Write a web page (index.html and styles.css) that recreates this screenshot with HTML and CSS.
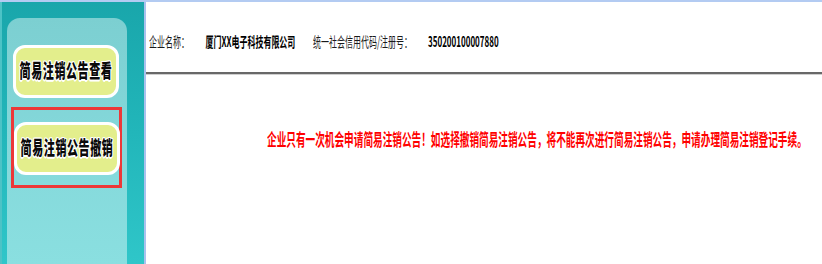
FILE: index.html
```html
<!DOCTYPE html>
<html lang="zh-CN">
<head>
<meta charset="utf-8">
<title>简易注销公告</title>
<link rel="stylesheet" href="styles.css">
</head>
<body>
<div class="page">
  <aside class="sidebar">
    <div class="panel">
      <div class="btn btn-view"><span class="btn-text">简易注销公告查看</span></div>
      <div class="selected">
        <div class="btn btn-revoke"><span class="btn-text">简易注销公告撤销</span></div>
      </div>
    </div>
  </aside>
  <main class="content">
    <header class="header">
      <div class="info sq">
        <span class="label l1">企业名称：</span>
        <span class="value v1">厦门XX电子科技有限公司</span>
        <span class="label l2">统一社会信用代码/注册号：</span>
        <span class="value">350200100007880</span>
      </div>
    </header>
    <div class="notice">
      <span class="msg sq">企业只有一次机会申请简易注销公告！如选择撤销简易注销公告，将不能再次进行简易注销公告，申请办理简易注销登记手续。</span>
    </div>
  </main>
</div>
</body>
</html>
```

FILE: styles.css
```css
* { box-sizing: border-box; }
html, body { margin: 0; padding: 0; }
body {
  width: 822px;
  height: 264px;
  overflow: hidden;
  background: #ffffff;
  font-family: "Noto Sans CJK SC", "Noto Sans", sans-serif;
}
.page {
  display: flex;
  height: 264px;
  overflow: hidden;
  border-top: 2px solid #b3cbf2;
}
.sidebar {
  width: 146px;
  flex: none;
  border-left: 2px solid #4cc3c6;
  border-right: 2px solid #a9c2ee;
  background: linear-gradient(to bottom, #19a6ab 0%, #22b6ba 50%, #2fc6c9 100%);
  padding-top: 16px;
}
.panel {
  margin-left: 5px;
  width: 120px;
  height: 100%;
  border-radius: 13px 13px 0 0;
  background: linear-gradient(to bottom, #7ccfd1 0%, #84d8da 50%, #8adfe0 100%);
  padding-top: 27px;
}
.btn {
  width: 106px;
  height: 53px;
  border: 3px solid #ffffff;
  border-radius: 12px;
  background: #e3ee8c;
  display: flex;
  align-items: center;
  justify-content: center;
  overflow: hidden;
}
.btn-view { margin-left: 6px; }
.btn-text {
  display: inline-block;
  white-space: nowrap;
  font-size: 19px;
  line-height: 22px;
  font-weight: 900;
  color: #0a0a0a;
  letter-spacing: 1px;
  transform: scaleX(0.58);
  margin-top: -4px;
  text-shadow:
    1.5px 0 0 #fff, -1.5px 0 0 #fff, 0 1.5px 0 #fff, 0 -1.5px 0 #fff,
    1px 1px 0 #fff, -1px -1px 0 #fff, 1px -1px 0 #fff, -1px 1px 0 #fff;
}
.selected {
  margin-top: 9px;
  margin-left: 4px;
  width: 111px;
  height: 81px;
  border: 3px solid #ec3838;
  padding-top: 12px;
}
.btn-revoke { margin-left: 0; }

.content {
  flex: 1;
  min-width: 0;
  display: flex;
  flex-direction: column;
}
.header {
  height: 72px;
  border-bottom: 2px solid #686868;
  box-shadow: 0 1px 0 #cfcfcf;
  padding-left: 3px;
  padding-top: 26px;
}
.sq {
  display: inline-block;
  white-space: nowrap;
  transform-origin: left center;
}
.info {
  transform: scaleX(0.57);
  font-size: 14px;
  line-height: 18px;
  color: #111;
}
.label { font-weight: 400; color: #1a1a1a; }
.value { font-weight: 700; color: #000; }
.l1 { margin-right: 26px; }
.v1 { margin-right: 28px; }
.l2 { margin-right: 25px; }

.notice {
  padding-left: 121px;
  padding-top: 53px;
}
.msg {
  transform: scaleX(0.567);
  font-size: 17px;
  line-height: 20px;
  font-weight: 700;
  color: #ff0000;
}
```
